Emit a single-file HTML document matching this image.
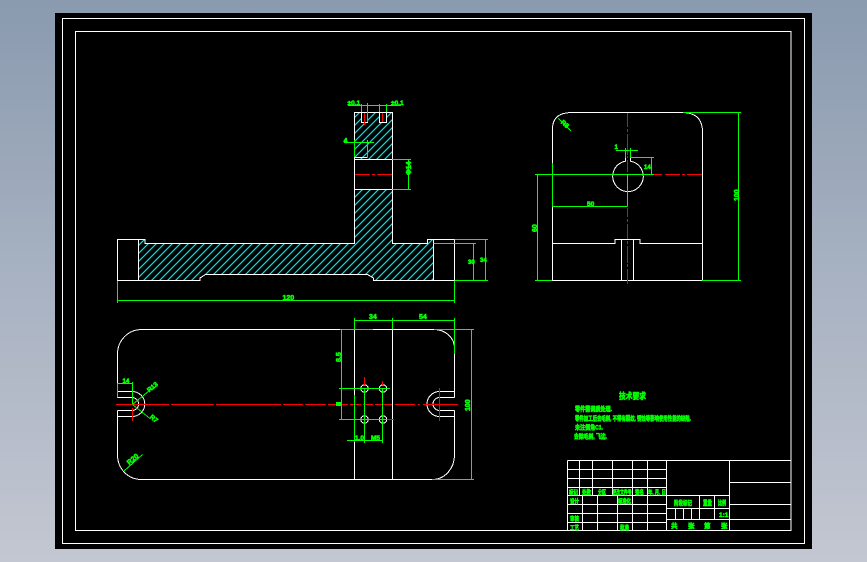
<!DOCTYPE html>
<html lang="zh">
<head>
<meta charset="utf-8">
<title>CAD Drawing</title>
<style>
html,body{margin:0;padding:0;width:867px;height:562px;overflow:hidden;background:linear-gradient(180deg,#8a9aaf 0%,#a8b2c2 50%,#c3c7d1 100%);}
svg{display:block;position:absolute;left:0;top:0;shape-rendering:crispEdges;}
text{font-family:"Liberation Sans","Noto Sans CJK SC",sans-serif;fill:#00ff00;stroke:#00ff00;stroke-width:.6;font-weight:bold;}
.w{stroke:#fff;fill:none;stroke-width:1;}
.g{stroke:#00ff00;fill:none;stroke-width:1;}
.r{stroke:#ff0000;fill:none;stroke-width:1;}
</style>
</head>
<body>
<svg width="867" height="562" viewBox="0 0 867 562" xmlns="http://www.w3.org/2000/svg">
<defs>
<pattern id="h" width="8" height="8" patternUnits="userSpaceOnUse">
<path d="M-1 9L9 -1M-1 1L1 -1M7 9L9 7" stroke="#00e4e4" stroke-width="1.2" fill="none" shape-rendering="geometricPrecision"/>
</pattern>
</defs>
<rect x="55" y="13" width="757" height="536" fill="#000"/>
<rect class="w" x="62.5" y="18.5" width="742" height="525"/>
<rect class="w" x="75.5" y="31.5" width="715.5" height="499"/>

<!-- front section view -->
<path d="M138.5 240H145L145.5 243.5H354.5V112.5H392.5V243.5H427.5V240H433.5V280.5H373.5L373 277L367.5 274.5H205.5L200 277L199.5 280.5H138.5Z" fill="url(#h)"/>
<rect x="355" y="160" width="37" height="29" fill="#000"/>
<rect x="361.5" y="112" width="6" height="10" fill="#000"/>
<rect x="379.5" y="112" width="7" height="10" fill="#000"/>
<path class="w" d="M117.5 239.5H145V243.5H354.5V112.5H392.5V243.5H427.5V239.5H454.5V280.5H373.5V278L367.5 274.5H205.5L200 278V280.5H117.5Z"/>
<path class="w" d="M138.5 239.5V280.5M433.5 239.5V280.5M354.5 159.5H392.5M354.5 189.5H392.5M354.5 157.5H367.5M361.5 112.5V122.5H367.5V112.5M379.5 112.5V122.5H386.5V112.5"/>
<path class="r" d="M364.5 113V125M382.5 113V122M355 174.5H370M372 174.5H375M377 174.5H392"/>
<path class="g" d="M348 105.5H401M361.5 104V112M367.5 103V122M379.5 104V112M386.5 104V112M344 142.5H374M354.5 140V157M367.5 140V157M392 159.5H411M392 189.5H411M408.5 159.5V189.5M454.5 239.5H488M433.5 243.5H476M454.5 280.5H488M473.5 243.5V280.5M485.5 239.5V280.5M117.5 300.5H454.5M117.5 281V303M454.5 281V303"/>
<text x="347.5" y="105" font-size="6.5">±0.1</text>
<text x="391" y="105" font-size="6.5">±0.1</text>
<text x="343.5" y="143" font-size="7">4</text>
<text x="408" y="178" font-size="7" transform="rotate(-90 408 175)">Φ14</text>
<text x="468" y="264" font-size="6">30</text>
<text x="480" y="262" font-size="6">34</text>
<text x="282.5" y="300" font-size="7">120</text>

<!-- plan view -->
<path class="w" d="M354.5 329.5V479.5M392.5 329.5V479.5"/>
<path class="w" d="M117.5 397V354A24 24.500 0 0 1 141 329.500H434A20.500 18.500 0 0 1 454.500 348V397M454.500 410.500V455A22 24.500 0 0 1 433 479.500H141A23.500 24.500 0 0 1 117.500 455V410.500"/>
<path class="w" d="M117.500 391.500H132A12.800 12.500 0 0 1 132 416.500H117.500M117.500 397.500H132A6.600 6.500 0 0 1 132 410.500H117.500M117.500 391.500V397.500M117.500 410.500V416.500"/>
<path class="w" d="M454.500 391.500H439.500A12.500 12.500 0 0 0 439.500 416.500H454.500M454.500 397.500H439.500A6.500 6.500 0 0 0 439.500 410.500H454.500M454.500 391.500V397.500M454.500 410.500V416.500"/>
<circle class="w" cx="364.500" cy="388.500" r="3.700"/>
<circle class="w" cx="383" cy="388.500" r="3.700"/>
<circle class="w" cx="364.500" cy="419.500" r="3.700"/>
<circle class="w" cx="383" cy="419.500" r="3.700"/>
<path class="r" d="M116 404.500H169M171 404.500H214M216 404.500H281M283 404.500H303M305 404.500H326M328 404.500H348M350 404.500H361M363 404.500H373M375 404.500H392M395 404.500H415M418 404.500H420M423 404.500H458"/>
<path class="r" d="M132.500 408V421M439.500 388V421M364.500 377V385M382.500 381V385M386 388.500H390M387 419.500H394"/>
<path class="g" d="M117.500 383.500H132.500M117.500 383.500V397M132.500 382V404M340 329.500H373M434 329.500H474M432 479.500H474M471.500 329.500V479.500M454.500 318V354M354.500 320.500H454.500M354.500 318V329M392.500 318V329M341.500 329.500V419.500M339 388.500H390M339 419.500H387M364.500 388V443M382.500 388V443M354.500 395V442M347 440.500H382.500"/>
<rect x="336" y="402" width="5" height="4" fill="#00ff00"/>
<path class="g" d="M132.500 404.500L152.500 388M132.500 404.500L150 418.500M124 471L142.500 454.500"/>
<text x="122.500" y="383" font-size="6">14</text>
<text x="146.500" y="391" font-size="6.500" transform="rotate(-40 150 388)">R13</text>
<text x="150" y="420" font-size="6.500" transform="rotate(40 153 418)">R7</text>
<text x="127" y="463" font-size="7" transform="rotate(-40 131 461)">R20</text>
<text x="369" y="319" font-size="7">34</text>
<text x="419" y="319" font-size="7">54</text>
<text x="335" y="360" font-size="7" transform="rotate(-90 339 358)">8.5</text>
<text x="462" y="407" font-size="7" transform="rotate(-90 468 405)">100</text>
<text x="355" y="440" font-size="6.500">1.0</text>
<text x="371" y="440" font-size="6.500">M5</text>

<!-- side view -->
<path class="w" d="M552.500 128Q553 113 571 112.500H683Q702 113 702.500 131V280.500H552.500Z"/>
<path class="w" d="M625.500 158V161.200A15.300 15.300 0 1 0 630.500 161.200V158"/>
<path class="w" d="M552.500 243.500H615V239.500H640V243.500H702.500M621.500 239.500V280.500M633.500 239.500V280.500"/>
<path class="r" d="M627.500 113V127M627.500 129V132M627.500 134V155M627.500 156V158M627.500 160V172M627.500 208V217M627.500 219V222M627.500 224V239M627.500 241V244M627.500 246V263M627.500 264V267M627.500 269V284M654 174.500H662M665 174.500H680M682 174.500H685M687 174.500H702"/>
<path class="g" d="M552.500 163V206.500M535 174.500H654M627.500 174.500V206.500M552.500 206.500H627.500M616 150.500H638M625.500 148V158M630.500 148V158M630 157.500H654M651.500 157.500V174M683 112.500H741M702 280.500H741M738.500 112.500V280.500M537.500 174.500V280.500M535 280.500H552"/>
<path class="g" d="M558.500 118.500L571 131"/>
<text x="614.500" y="149" font-size="6">1</text>
<text x="644" y="169" font-size="6">14</text>
<text x="587" y="206" font-size="6.500">50</text>
<text x="561.500" y="126" font-size="6.500" transform="rotate(40 565 123)">R8</text>
<text x="731" y="199" font-size="7" transform="rotate(-90 736 196)">100</text>
<text x="531" y="230" font-size="7" transform="rotate(-90 535 228)">60</text>

<!-- technical requirements -->
<text x="619" y="399" font-size="8.500" textLength="27" lengthAdjust="spacingAndGlyphs">技术要求</text>
<text x="575" y="411" font-size="6.500" textLength="37" lengthAdjust="spacingAndGlyphs">零件需调质处理.</text>
<text x="575" y="420.500" font-size="6.500" textLength="116" lengthAdjust="spacingAndGlyphs">零件加工后去毛刺, 不得有裂纹, 锈蚀等影响使用性能的缺陷.</text>
<text x="575" y="429.500" font-size="6.500" textLength="28" lengthAdjust="spacingAndGlyphs">未注倒角C1.</text>
<text x="574" y="438.500" font-size="6.500" textLength="33" lengthAdjust="spacingAndGlyphs">去除毛刺, 飞边.</text>

<!-- title block -->
<path class="w" d="M567.500 460.500H791M567.500 469.500H666.500M567.500 478.500H666.500M567.500 487.500H666.500M567.500 495.500H729.500M567.500 504.500H666.500M567.500 513.500H666.500M567.500 522.500H666.500"/>
<path class="w" d="M567.500 460.500V530.500M579.500 460.500V495.500M592.500 460.500V495.500M612.500 460.500V495.500M632.500 460.500V530.500M647.500 460.500V530.500M582.500 495.500V530.500M597.500 495.500V530.500M617.500 495.500V530.500M666.500 460.500V530.500"/>
<path class="w" d="M666.500 508.500H729.500M666.500 519.500H729.500M699.500 495.500V519.500M714.500 495.500V519.500M675.500 508.500V519.500M683.500 508.500V519.500M691.500 508.500V519.500M729.500 460.500V530.500M729.500 482.500H791M729.500 504.500H791M729.500 519.500H791"/>
<text x="569" y="494.500" font-size="6" textLength="9" lengthAdjust="spacingAndGlyphs">标记</text>
<text x="582" y="494.500" font-size="6" textLength="9" lengthAdjust="spacingAndGlyphs">处数</text>
<text x="598" y="494.500" font-size="6" textLength="8" lengthAdjust="spacingAndGlyphs">分区</text>
<text x="612.500" y="494.500" font-size="6" textLength="19" lengthAdjust="spacingAndGlyphs">更改文件号</text>
<text x="635" y="494.500" font-size="6" textLength="9" lengthAdjust="spacingAndGlyphs">签名</text>
<text x="648" y="494.500" font-size="6" textLength="18" lengthAdjust="spacingAndGlyphs">年, 月, 日</text>
<text x="570" y="503.500" font-size="6" textLength="9" lengthAdjust="spacingAndGlyphs">设计</text>
<text x="618" y="503.500" font-size="6" textLength="13" lengthAdjust="spacingAndGlyphs">标准化</text>
<text x="570" y="521" font-size="6" textLength="9" lengthAdjust="spacingAndGlyphs">审核</text>
<text x="570" y="530" font-size="6" textLength="9" lengthAdjust="spacingAndGlyphs">工艺</text>
<text x="620" y="530" font-size="6" textLength="9" lengthAdjust="spacingAndGlyphs">批准</text>
<text x="674" y="505" font-size="6.500" textLength="18" lengthAdjust="spacingAndGlyphs">阶段标记</text>
<text x="703" y="505" font-size="6.500" textLength="9" lengthAdjust="spacingAndGlyphs">重量</text>
<text x="718" y="505" font-size="6.500" textLength="8" lengthAdjust="spacingAndGlyphs">比例</text>
<text x="719" y="517" font-size="6.500">1:1</text>
<text x="671" y="528" font-size="6.500">共</text>
<text x="688" y="528" font-size="6.500">张</text>
<text x="704" y="528" font-size="6.500">第</text>
<text x="721" y="528" font-size="6.500">张</text>
</svg>
</body>
</html>
